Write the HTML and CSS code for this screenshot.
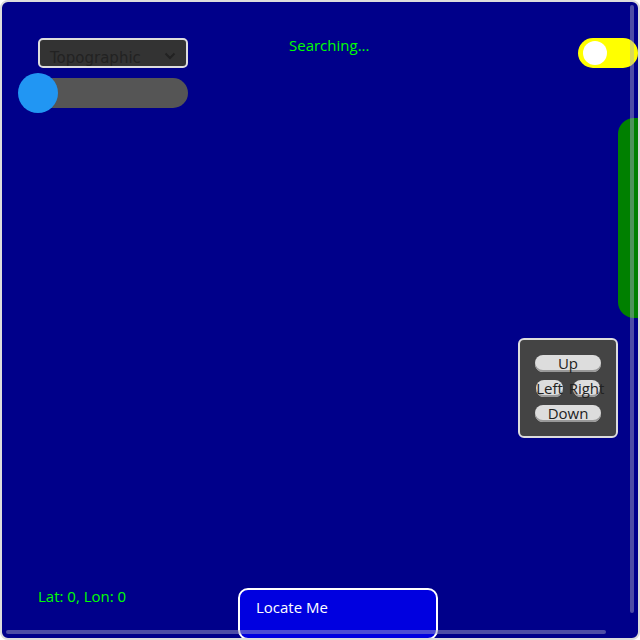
FILE: index.html
```html
<!DOCTYPE html>
<html>
<head>
<meta charset="utf-8">
<link rel="stylesheet" href="styles.css">
</head>
<body>
<div class="map">
  <div class="left-controls">
    <div class="select">
      <span>Topographic</span>
      <svg class="chev" width="12" height="8" viewBox="0 0 12 8"><path d="M1.5 1.5 L6 6 L10.5 1.5" fill="none" stroke="#222" stroke-width="2"/></svg>
    </div>
    <div class="slider"><div class="thumb"></div></div>
  </div>
  <div class="status">Searching...</div>
  <div class="toggle"><div class="knob"></div></div>
  <div class="side-bar"></div>
  <div class="dpad">
    <button class="btn wide">Up</button>
    <div class="row">
      <button class="btn small">Left</button>
      <button class="btn small">Right</button>
    </div>
    <button class="btn wide">Down</button>
  </div>
  <div class="coords">Lat: 0, Lon: 0</div>
  <button class="locate">Locate Me</button>
  <div class="scroll-v"></div>
  <div class="scroll-h"></div>
</div>
</body>
</html>
```
FILE: styles.css
```css
html, body {
  margin: 0;
  padding: 0;
  background: #ffffff;
}
.map {
  position: relative;
  box-sizing: border-box;
  width: 640px;
  height: 640px;
  border: 2px solid #dcdcdc;
  border-radius: 8px;
  background: #00008a;
  overflow: hidden;
  padding: 36px;
  font-family: "Open Sans", "Liberation Sans", sans-serif;
}
.left-controls {
  display: flex;
  flex-direction: column;
  gap: 10px;
  width: 150px;
}
.select {
  box-sizing: border-box;
  height: 30px;
  background: #333333;
  border: 2px solid #dddddd;
  border-radius: 5px;
  display: flex;
  align-items: center;
  justify-content: space-between;
  padding: 0 10px 0 10px;
  font-family: "DejaVu Sans", sans-serif;
  font-size: 15px;
  color: #222222;
}
.select span { margin-top: 9px; }
.chev { margin-top: 5px; }
.slider {
  position: relative;
  height: 30px;
  background: #555555;
  border-radius: 15px;
}
.thumb {
  position: absolute;
  left: -20px;
  top: -5px;
  width: 40px;
  height: 40px;
  border-radius: 50%;
  background: #2196f3;
}
.status {
  position: absolute;
  left: 287px;
  top: 33px;
  font-size: 15px;
  color: #00ff00;
}
.toggle {
  position: absolute;
  left: 576px;
  top: 36px;
  width: 60px;
  height: 30px;
  border-radius: 15px;
  background: #ffff00;
}
.knob {
  position: absolute;
  left: 5px;
  top: 3px;
  width: 24px;
  height: 24px;
  border-radius: 50%;
  background: #ffffff;
}
.side-bar {
  position: absolute;
  left: 616px;
  top: 116px;
  width: 40px;
  height: 200px;
  border-radius: 16px;
  background: #008000;
}
.dpad {
  position: absolute;
  left: 516px;
  top: 336px;
  box-sizing: border-box;
  width: 100px;
  height: 100px;
  background: #444444;
  border: 2px solid #dddddd;
  border-radius: 6px;
  display: flex;
  flex-direction: column;
  align-items: center;
  justify-content: center;
  gap: 8px;
}
.row {
  display: flex;
  gap: 10px;
}
.btn {
  box-sizing: border-box;
  height: 17px;
  padding: 0;
  border: none;
  border-radius: 8px;
  background: #dddddd;
  box-shadow: inset 0 -2px 0 #999999;
  color: #222222;
  font-family: "Open Sans", sans-serif;
  font-size: 15px;
  line-height: 16px;
  display: flex;
  justify-content: center;
  white-space: nowrap;
}
.btn.wide { width: 66px; }
.btn.small { width: 27px; overflow: visible; }
.coords {
  position: absolute;
  left: 36px;
  top: 584px;
  font-size: 15px;
  color: #00ff00;
}
.locate {
  position: absolute;
  left: 236px;
  top: 586px;
  box-sizing: border-box;
  width: 200px;
  height: 52px;
  background: #0000e0;
  border: 2px solid #ffffff;
  border-radius: 10px;
  color: #ffffff;
  font-family: "Open Sans", sans-serif;
  font-size: 15px;
  text-align: left;
  padding: 7px 16px 0 16px;
  display: flex;
  align-items: flex-start;
}
.scroll-v {
  position: absolute;
  left: 628px;
  top: 3px;
  width: 4px;
  height: 608px;
  border-radius: 2px;
  background: rgba(170, 170, 200, 0.45);
}
.scroll-h {
  position: absolute;
  left: 4px;
  top: 628px;
  width: 600px;
  height: 4px;
  border-radius: 2px;
  background: rgba(170, 170, 200, 0.45);
}
```
